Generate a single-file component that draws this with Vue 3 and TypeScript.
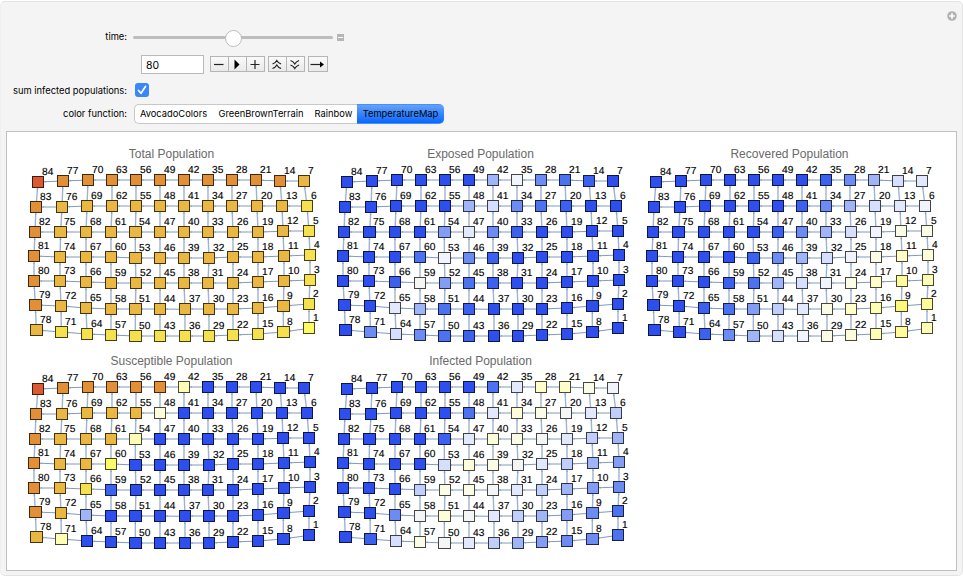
<script setup lang="ts">
import { ref } from 'vue'

const palette: Record<string, string> = {
  a: '#2e4fee', b: '#3d61ef', c: '#4d72f0', d: '#6c8bf3', e: '#839df5', f: '#a0b4f8',
  g: '#c0cefb', h: '#d6dffd', i: '#e2e9fd', j: '#f1f4fd', k: '#f3f6f4', l: '#fbfce6',
  m: '#fdfdda', n: '#fffdc8', o: '#fefdb5', p: '#fefb9c', q: '#fcf87c', r: '#fdfb65',
  s: '#f5e04e', t: '#eab742', u: '#e29037', v: '#dc5a33',
}

const columnsX: number[][] = [
  [69, 144, 219, 291, 363, 435, 507, 579, 651, 723, 795, 867],
  [63, 141, 216, 291, 363, 435, 507, 579, 651, 726, 801, 876],
  [60, 137, 213, 288, 361, 435, 507, 579, 654, 729, 804, 882],
  [57, 135, 213, 288, 361, 435, 507, 582, 654, 729, 807, 885],
  [57, 135, 213, 288, 363, 435, 507, 579, 654, 729, 807, 885],
  [61, 138, 213, 288, 361, 435, 510, 582, 654, 729, 805, 882],
  [64, 139, 216, 288, 361, 435, 510, 582, 654, 729, 805, 882],
]
const rowsY: number[][] = [
  [126, 123, 120, 120, 120, 120, 120, 120, 120, 120, 123, 123],
  [201, 201, 198, 198, 198, 198, 198, 198, 198, 198, 198, 198],
  [276, 276, 276, 276, 276, 276, 276, 276, 276, 276, 274, 273],
  [348, 351, 351, 351, 354, 354, 354, 354, 351, 351, 348, 345],
  [423, 423, 426, 428, 429, 429, 429, 429, 429, 426, 423, 420],
  [495, 498, 504, 507, 507, 507, 508, 507, 507, 504, 498, 492],
  [570, 576, 582, 585, 588, 588, 588, 588, 585, 582, 576, 565],
]

interface City { id: number; x: number; y: number; w: number; row: number; col: number }
interface Road { x1: number; y1: number; x2: number; y2: number; vertical: boolean; head: string }

const cities: City[] = []
const roads: Road[] = []
for (let row = 0; row < 7; row++) {
  for (let col = 0; col < 12; col++) {
    const raw = columnsX[row][col]
    const x = Math.floor(raw / 3)
    const y = Math.round(rowsY[row][col] / 3)
    cities.push({ id: 84 - col * 7 - row, x, y, w: raw % 3 === 0 ? 12 : 13, row, col })
    if (col < 11) {
      const x2 = columnsX[row][col + 1] / 3
      const y2 = rowsY[row][col + 1] / 3
      const ay = y + 0.3 * (y2 - y)
      roads.push({ x1: x, y1: y, x2, y2, vertical: false, head: `M${x + 6} ${ay}l2 -1v2z` })
    }
    if (row < 6) {
      const x2 = columnsX[row + 1][col] / 3
      const y2 = rowsY[row + 1][col] / 3
      const ax = raw / 3 + 0.3 * (x2 - raw / 3)
      roads.push({ x1: raw / 3, y1: y, x2, y2, vertical: true, head: `M${ax} ${y + 6}l-1 2h2z` })
    }
  }
}

const graphs = [
  { title: 'Total Population', shades: ['vuuuuuuuuuut', 'utttttttttts', 'utttttttttts', 'utttttttttts', 'utttttttttts', 'utttttttttts', 'tssssssssssr'] },
  { title: 'Exposed Population', shades: ['aaaaaafjdcba', 'aaaaafhdcbaa', 'aaaaeidbaaaa', 'aaacjdbaaaaa', 'aabkecbaaaaa', 'aaifcbaaaaaa', 'adhdcbaaaaaa'] },
  { title: 'Recovered Population', shades: ['aaaaaaabdfhi', 'aaaaaabdfhij', 'aaaaabdfhjll', 'aaaabdfhjlnm', 'aaabcfhjlnpo', 'aabcegilnoqp', 'aabdfhjlmopo'] },
  { title: 'Susceptible Population', shades: ['vuuuuuoaaaaa', 'uttttmaaaaaa', 'utttoaaaaaaa', 'uttraaaaaaaa', 'utsbaaaaaaaa', 'utfaaaaaaaaa', 'toaaaaaaaaaa'] },
  { title: 'Infected Population', shades: ['aaaaaacinnlj', 'aaaaacimlkig', 'aaaabimlkigf', 'aaaahmlkigfe', 'aaagllkigfed', 'aadkmkigfedc', 'abhlkigfeddc'] },
]

const colorFunctions = ['AvocadoColors', 'GreenBrownTerrain', 'Rainbow', 'TemperatureMap']
const selected = ref('TemperatureMap')
const time = ref('80')
const summed = ref(true)
</script>

<template>
  <main class="panel">
    <svg class="expand" viewBox="0 0 10 10"><circle cx="5" cy="5" r="4.8" /><path d="M5 2.200v5.600M2.200 5h5.600" /></svg>
    <section class="controls">
      <div class="line time">
        <label>time:</label>
        <div class="track"><span class="thumb"></span></div>
        <span class="collapse"></span>
      </div>
      <div class="line stepper">
        <input v-model="time" class="field" />
        <div class="group">
          <button><svg viewBox="0 0 18 16"><path d="M4 8.500h9.500" /></svg></button>
          <button><svg viewBox="0 0 18 16"><path class="solid" d="M6.500 3.500v10l5-5z" /></svg></button>
          <button><svg viewBox="0 0 18 16"><path d="M4.500 8.500h9M9 4v9" /></svg></button>
        </div>
        <div class="group">
          <button><svg viewBox="0 0 18 16"><path d="M4.500 8Q7.500 7 8.800 4.500Q10.100 7 13.100 8M4.500 12.500Q7.500 11.500 8.800 9Q10.100 11.500 13.100 12.500" /></svg></button>
          <button><svg viewBox="0 0 18 16"><path d="M4.500 4.500Q7.500 5.500 8.800 8Q10.100 5.500 13.100 4.500M4.500 9Q7.500 10 8.800 12.500Q10.100 10 13.100 9" /></svg></button>
        </div>
        <div class="group">
          <button class="wide"><svg viewBox="0 0 20 16"><path d="M2.500 8.500h10" /><path class="solid" d="M12 5.500v6l4-3z" /></svg></button>
        </div>
      </div>
      <div class="line sum">
        <label>sum infected populations:</label>
        <button class="check" @click="summed = !summed">
          <svg v-if="summed" viewBox="0 0 14 14"><path d="M3.500 7.500L6 10.300L10.500 3.500" /></svg>
        </button>
      </div>
      <div class="line colors">
        <label>color function:</label>
        <div class="tabs">
          <button v-for="name in colorFunctions" :key="name" :class="[name.toLowerCase(), { active: selected === name }]" @click="selected = name">{{ name }}</button>
        </div>
      </div>
    </section>
    <section class="board">
      <svg v-for="graph in graphs" :key="graph.title" class="graph" viewBox="0 0 309 207">
        <text class="title" x="156.500" y="18" text-anchor="middle">{{ graph.title }}</text>
        <g v-for="(road, n) in roads" :key="n">
          <line :class="road.vertical ? 'down' : 'across'" :x1="road.x1" :y1="road.y1" :x2="road.x2" :y2="road.y2" />
          <path class="head" :d="road.head" />
        </g>
        <g v-for="city in cities" :key="city.id">
          <rect :x="city.x - 6" :y="city.y - 6" :width="city.w" height="12" :fill="palette[graph.shades[city.row][city.col]]" />
          <rect class="frame" :x="city.x - 5.5" :y="city.y - 5.5" :width="city.w - 1" height="11" />
          <text class="tag" :x="city.x + 4" :y="city.y - 7">{{ city.id }}</text>
        </g>
      </svg>
    </section>
  </main>
</template>

<style>
body { margin: 0; background: #fff; }
</style>

<style scoped>
.panel {
  position: relative;
  box-sizing: border-box;
  width: 963px;
  height: 575px;
  margin-top: 1px;
  border: 1px solid #e3e3e3;
  border-left-color: #efefef;
  border-radius: 5px;
  background: #f4f4f4;
  font: 9.350px Inter, "Liberation Sans", sans-serif;
  color: #000;
}
.expand { position: absolute; right: 5px; top: 9px; width: 10px; height: 10px; }
.expand circle { fill: #b2b2b2; }
.expand path { stroke: #fff; stroke-width: 1.700; }
.controls { height: 129px; padding-top: 25px; box-sizing: border-box; }
.line { display: flex; align-items: center; }
.line label { width: 126px; text-align: right; flex: none; white-space: nowrap; }
.time { height: 20px; }
.time label, .colors label { padding-bottom: 2px; box-sizing: border-box; }
.track { position: relative; width: 200px; height: 3px; margin-left: 6px; border-radius: 2px; background: #bdbdbd; }
.thumb { position: absolute; left: 92px; top: -6px; width: 15px; height: 15px; border: 1px solid #bcbcbc; border-radius: 50%; background: #fff; }
.collapse { width: 7px; height: 7px; margin-left: 4px; background: linear-gradient(#b5b5b5 3px, #fff 3px, #fff 4px, #b5b5b5 4px); border: solid #b5b5b5; border-width: 0 1px; box-sizing: border-box; }
.stepper { height: 34px; padding-left: 140px; }
.field { box-sizing: border-box; width: 63px; height: 19px; margin: 0 6px 0 0; padding: 2px 4px 0; border: 1px solid #bababa; background: #fff; font: 10.500px Inter, sans-serif; color: #000; border-radius: 0; }
.group { display: flex; margin-right: 4px; }
.group button { box-sizing: border-box; width: 19px; height: 16px; padding: 0; border: 1px solid #b5b5b5; margin-right: -1px; background: linear-gradient(#fafafa, #e9e9e9); }
.group .wide { width: 20px; }
.group svg { display: block; width: 18px; height: 16px; margin: -1px; fill: none; stroke: #222; stroke-width: 1.200; }
.group .wide svg { width: 20px; }
.group .solid { fill: #000; stroke: none; }
.sum { height: 18px; }
.check { width: 14px; height: 14px; margin-left: 8px; padding: 0; border: 0; border-radius: 3px; background: #3a87fa; }
.check svg { display: block; fill: none; stroke: #fff; stroke-width: 1.700; stroke-linecap: round; stroke-linejoin: round; }
.colors { height: 30px; }
.tabs { display: flex; margin-left: 7px; height: 20px; }
.tabs button { box-sizing: border-box; padding: 0 1px 1px 0; height: 20px; border: 1px solid #c8c8c8; border-width: 1px 0; background: #fff; font: 9.350px Inter, sans-serif; color: #000; }
.tabs .avocadocolors { width: 79px; border-left-width: 1px; border-radius: 5px 0 0 5px; }
.tabs .greenbrownterrain { width: 97px; }
.tabs .rainbow { width: 47px; padding-right: 0; }
.tabs .temperaturemap { width: 87px; padding-right: 0; border-radius: 0 5px 5px 0; }
.tabs .active { border-color: #4a8ff5; background: linear-gradient(#64a2fc, #0867ff); }
.board {
  box-sizing: border-box;
  display: grid;
  grid-template-columns: repeat(3, 309px);
  grid-template-rows: repeat(2, 207px);
  width: 951px;
  height: 440px;
  margin-left: 5px;
  padding: 8px 0 0 8px;
  border: 1px solid #c0c0c0;
  background: #fff;
}
.graph { width: 309px; height: 207px; overflow: visible; }
.title { font: 12px "Liberation Sans", sans-serif; fill: #6a6a6a; }
.across { stroke: #7f9abf; stroke-width: 1; }
.down { stroke: #9eb3d2; stroke-width: 1.400; }
.head { fill: #7f9abf; opacity: 0.700; }
.frame { fill: none; stroke: #000; stroke-opacity: 0.720; stroke-width: 1; }
.tag { font: 10.200px "Liberation Sans", sans-serif; fill: #000; stroke: #000; stroke-width: 0.150; text-rendering: geometricPrecision; }
</style>
